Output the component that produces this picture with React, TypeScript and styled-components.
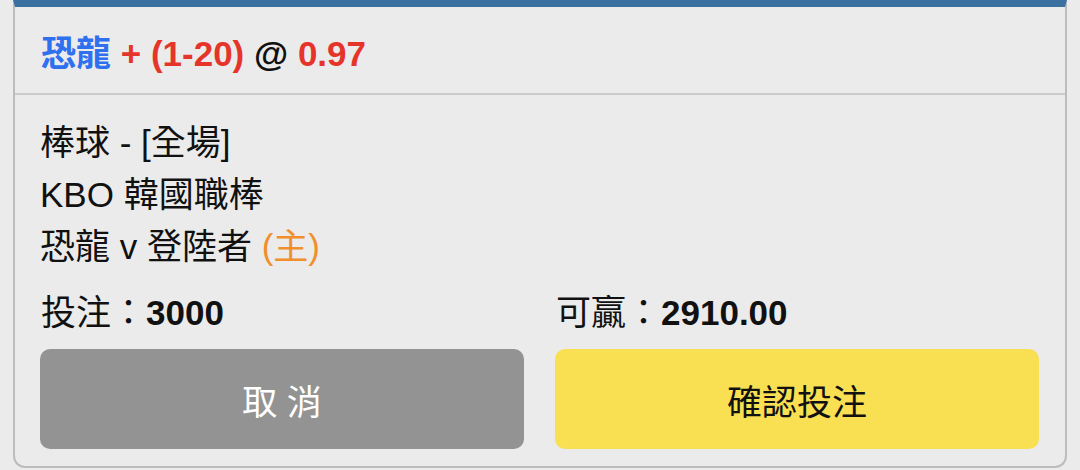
import React from 'react';
import styled, { createGlobalStyle } from 'styled-components';

const GlobalStyle = createGlobalStyle`
  html, body {
    margin: 0;
    padding: 0;
    background: #ebebeb;
  }
  body {
    font-family: "Liberation Sans", "Noto Sans CJK TC", sans-serif;
    color: #111;
  }
`;

const Card = styled.div`
  margin: 0 13px;
  height: 468px;
  box-sizing: border-box;
  background: #ebebeb;
  border: 2px solid #bcbcbc;
  border-top: 7px solid #3b71a0;
  border-radius: 0 0 12px 12px;
  display: flex;
  flex-direction: column;
`;

const Header = styled.div`
  height: 86px;
  display: flex;
  align-items: center;
  padding: 0 26px;
  border-bottom: 2px solid #cbcbcb;
`;

const Title = styled.div`
  font-size: 35px;
  font-weight: 700;
  white-space: nowrap;
`;

const Team = styled.span`
  color: #2f70ef;
`;

const Red = styled.span`
  color: #e5352b;
`;

const At = styled.span`
  color: #111;
`;

const Body = styled.div`
  padding: 22px 26px 0 25px;
  display: flex;
  flex-direction: column;
`;

const Line = styled.div`
  font-size: 35px;
  line-height: 52px;
  height: 52px;
  white-space: nowrap;
`;

const Home = styled.span`
  color: #f08f2b;
`;

const Grid = styled.div`
  display: grid;
  grid-template-columns: 1fr 1fr;
  column-gap: 31px;
`;

const Amount = styled.div`
  font-size: 35px;
  line-height: 52px;
  margin-top: 14px;
  margin-bottom: 10px;
  padding-left: 1px;
  white-space: nowrap;
  b {
    font-weight: 700;
  }
`;

const Button = styled.button<{ $primary?: boolean }>`
  height: 100px;
  border: none;
  border-radius: 10px;
  font-family: inherit;
  font-size: 35px;
  background: ${({ $primary }) => ($primary ? '#f9df52' : '#939393')};
  color: ${({ $primary }) => ($primary ? '#111' : '#fff')};
  padding: 0;
  cursor: pointer;
`;

export default function App() {
  return (
    <>
      <GlobalStyle />
      <Card>
        <Header>
          <Title>
            <Team>恐龍</Team> <Red>+ (1-20)</Red> <At>@</At> <Red>0.97</Red>
          </Title>
        </Header>
        <Body>
          <Line>棒球 - [全場]</Line>
          <Line>KBO 韓國職棒</Line>
          <Line>
            恐龍 v 登陸者 <Home>(主)</Home>
          </Line>
          <Grid>
            <Amount>
              投注：<b>3000</b>
            </Amount>
            <Amount>
              可贏：<b>2910.00</b>
            </Amount>
            <Button>取 消</Button>
            <Button $primary>確認投注</Button>
          </Grid>
        </Body>
      </Card>
    </>
  );
}
